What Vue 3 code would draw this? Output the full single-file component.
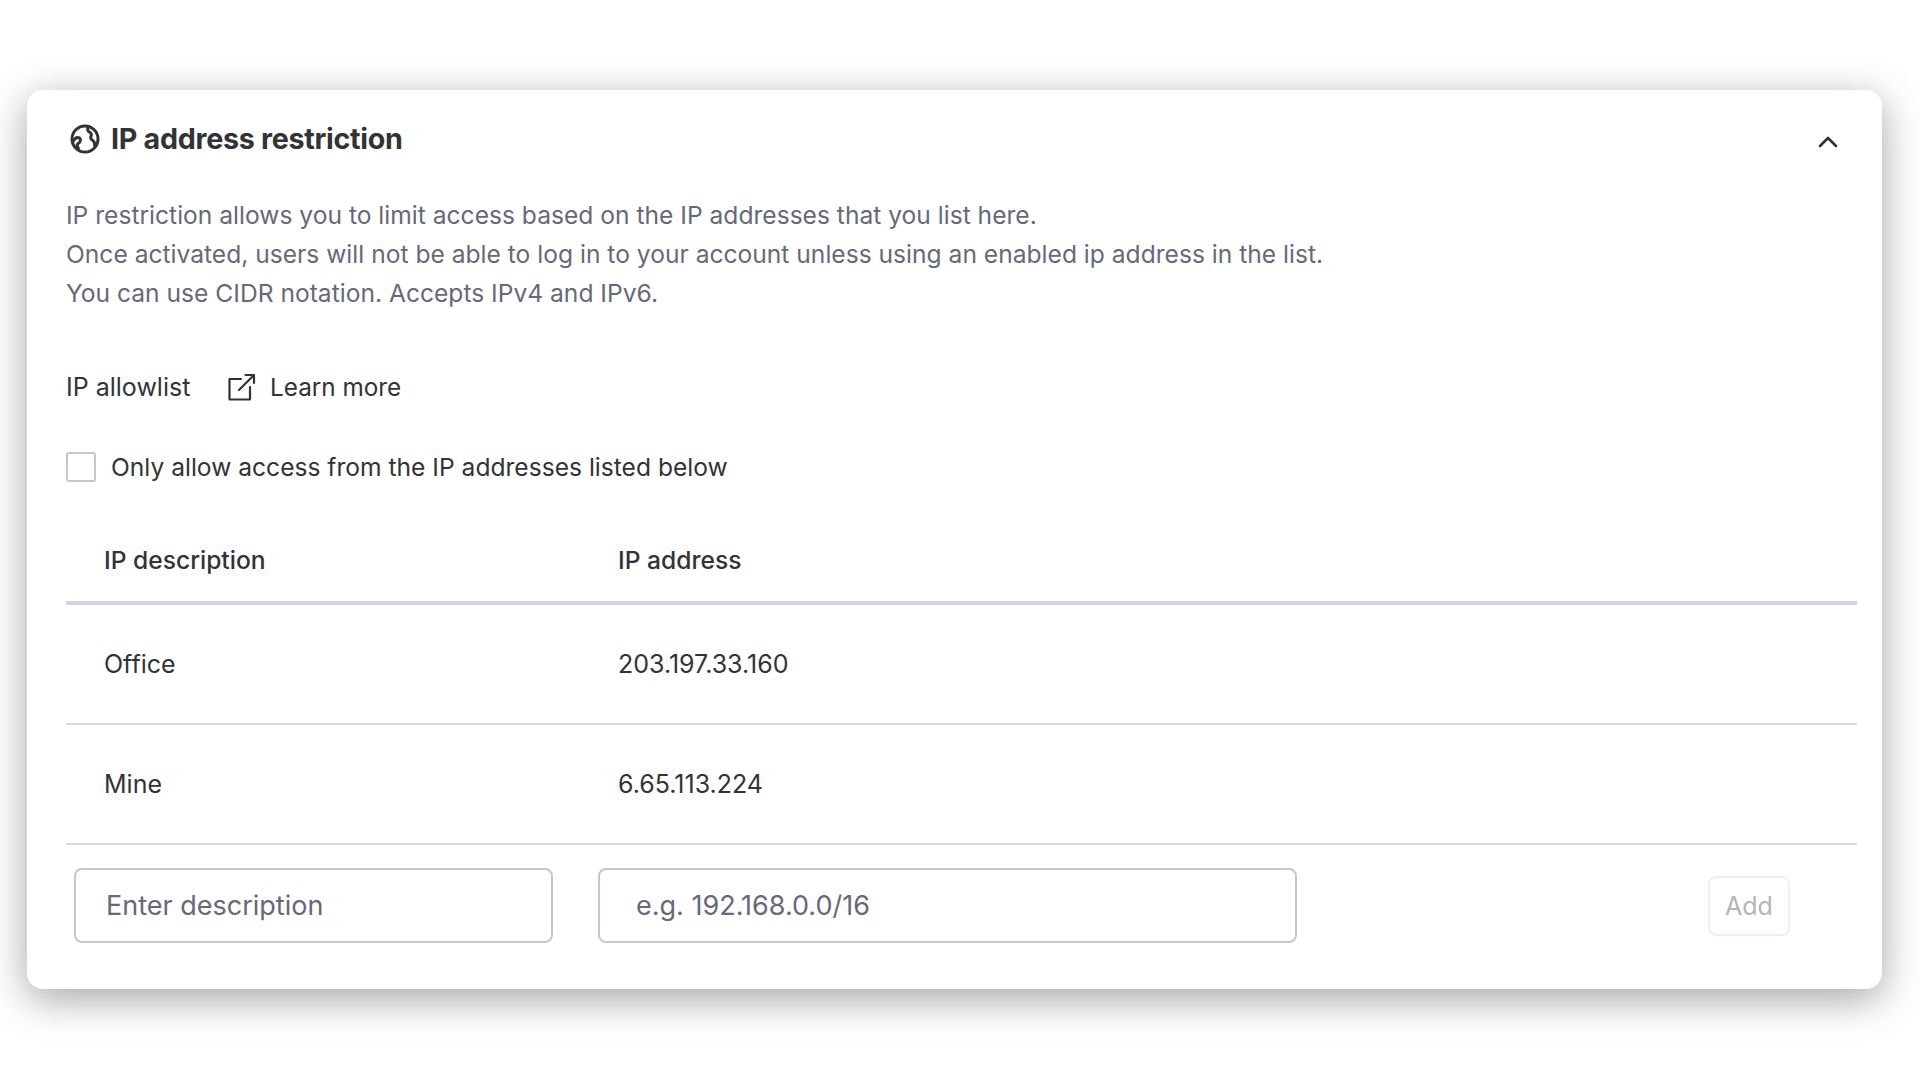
<script setup>
const rows = [
  { name: 'Office', ip: '203.197.33.160' },
  { name: 'Mine', ip: '6.65.113.224' }
]
</script>

<template>
  <div class="page">
    <section class="card">
      <header class="head">
        <div class="title">
          <svg class="globe" viewBox="0 0 30 30" fill="none" stroke="currentColor" stroke-width="3" stroke-linecap="round" stroke-linejoin="round">
            <circle cx="15" cy="15" r="13" />
            <path d="M2.6 18c1.4-2.6 3-4.4 5.2-4.4 2.4 0 3.4 2.4 2.2 4.2-.9 1.3-2.6 1.5-2.8 3.2-.1 1.2.5 2.4 1.2 3.6" />
            <path d="M18.5 2.5c-.9 1.5-1.2 3-.3 4.4 1 1.5 3 1.6 3.2 3.3.2 1.6-1.3 2.8-.5 4.4.8 1.6 3 2.2 3.5 4 .3 1 .3 1.8.1 2.6" />
          </svg>
          <h2>IP address restriction</h2>
        </div>
        <svg class="chev" viewBox="0 0 20 12" fill="none" stroke="currentColor" stroke-width="2.6" stroke-linecap="round" stroke-linejoin="round">
          <path d="M2 10l8-8 8 8" />
        </svg>
      </header>

      <p class="desc">
        IP restriction allows you to limit access based on the IP addresses that you list here.<br />
        Once activated, users will not be able to log in to your account unless using an enabled ip address in the list.<br />
        You can use CIDR notation. Accepts IPv4 and IPv6.
      </p>

      <div class="allow">
        <span class="allow-label">IP allowlist</span>
        <a class="learn">
          <svg viewBox="0 0 28 28" fill="none" stroke="currentColor" stroke-width="2.2" stroke-linecap="round" stroke-linejoin="round">
            <path d="M13 6H1.5v20.5H22V14" />
            <path d="M11 17L26 2M17.5 2H26v8" />
          </svg>
          Learn more
        </a>
      </div>

      <label class="check">
        <span class="box"></span>
        Only allow access from the IP addresses listed below
      </label>

      <div class="row thead">
        <span>IP description</span>
        <span>IP address</span>
      </div>
      <div v-for="r in rows" :key="r.ip" class="row tbody">
        <span>{{ r.name }}</span>
        <span>{{ r.ip }}</span>
      </div>

      <div class="add-row">
        <input class="inp first" placeholder="Enter description" />
        <input class="inp second" placeholder="e.g. 192.168.0.0/16" />
        <button class="add" disabled>Add</button>
      </div>
    </section>
  </div>
</template>

<style>
html, body { margin: 0; background: #fff; }
</style>

<style scoped>
.page {
  padding: 90px 38px 91px 27px;
  font-family: "Inter", "Noto Sans", sans-serif;
  color: #323338;
  box-sizing: border-box;
  height: 1080px;
}
.card {
  height: 899px;
  box-sizing: border-box;
  background: #fff;
  border-radius: 16px;
  box-shadow: 0 10px 40px rgba(0, 0, 0, 0.36);
  padding: 31px 25px 0 39px;
  display: flex;
  flex-direction: column;
}
.head {
  display: flex;
  justify-content: space-between;
  align-items: center;
  height: 36px;
}
.title { display: flex; align-items: center; gap: 11px; margin-left: 4px; }
.globe { width: 30px; height: 30px; }
h2 { margin: 0; font-size: 28.7px; font-weight: 700; line-height: 36px; letter-spacing: -0.3px; }
.chev { width: 20px; height: 12px; margin: 6px 19px 0 0; }
.desc {
  margin: 39px 0 0;
  font-size: 24.6px;
  line-height: 39px;
  color: #676879;
}
.allow {
  display: flex;
  align-items: center;
  margin-top: 54px;
  height: 40px;
  font-size: 25px;
}
.allow-label { width: 162px; }
.learn { display: flex; align-items: center; gap: 14px; font-size: 24.3px; }
.learn svg { width: 28px; height: 28px; }
.check {
  display: flex;
  align-items: center;
  gap: 15px;
  margin-top: 45px;
  height: 30px;
  font-size: 24.6px;
}
.box {
  width: 30px;
  height: 30px;
  box-sizing: border-box;
  border: 2px solid #c5c7d0;
  border-radius: 3px;
}
.row {
  display: grid;
  grid-template-columns: 514px 1fr;
  padding-left: 38px;
  align-items: center;
  font-size: 24.6px;
}
.thead {
  margin-top: 44px;
  height: 79px;
  border-bottom: 4px solid #cfd3e6;
  font-weight: 500;
  padding-bottom: 8px;
  box-sizing: border-box;
}
.tbody { height: 120px; border-bottom: 2px solid #d6d9e8; box-sizing: border-box; font-size: 25px; }
.add-row {
  display: flex;
  align-items: center;
  margin-top: 23px;
  padding-left: 8px;
}
.inp {
  height: 75px;
  box-sizing: border-box;
  border: 2px solid #c5c7d0;
  border-radius: 8px;
  font: inherit;
  font-size: 27px;
  outline: none;
  background: #fff;
  color: #323338;
}
.inp::placeholder { color: #676879; opacity: 1; }
.first { width: 479px; padding: 0 30px; }
.second { width: 699px; margin-left: 45px; padding: 0 36px; }
.add {
  margin-left: 411px;
  width: 82px;
  height: 60px;
  box-sizing: border-box;
  border: 2px solid #eeeef6;
  border-radius: 8px;
  background: #fff;
  font: inherit;
  font-size: 25px;
  color: #b5b5b5;
  padding: 0;
}
</style>
